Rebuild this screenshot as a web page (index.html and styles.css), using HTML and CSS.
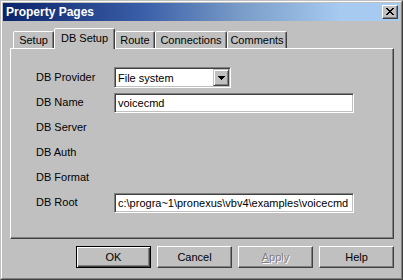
FILE: index.html
```html
<!DOCTYPE html>
<html>
<head>
<meta charset="utf-8">
<title>Property Pages</title>
<link rel="stylesheet" href="styles.css">
</head>
<body>
<div class="window">
  <div class="frame">
    <div class="titlebar">
      <span class="title">Property Pages</span>
      <button class="close" aria-label="Close">
        <svg width="8" height="7" viewBox="0 0 8 7" shape-rendering="crispEdges"><path fill="#000" d="M0 0h2v1h-2z M6 0h2v1h-2z M1 1h2v1h-2z M5 1h2v1h-2z M2 2h4v1h-4z M3 3h2v1h-2z M2 4h4v1h-4z M1 5h2v1h-2z M5 5h2v1h-2z M0 6h2v1h-2z M6 6h2v1h-2z"/></svg>
      </button>
    </div>
    <div class="tabs">
      <div class="tab tab-setup">Setup</div>
      <div class="tab tab-db selected">DB Setup</div>
      <div class="tab tab-route">Route</div>
      <div class="tab tab-conn">Connections</div>
      <div class="tab tab-comm">Comments</div>
    </div>
    <div class="panel">
      <div class="form">
        <label class="lbl">DB Provider</label>
        <div class="combo">
          <span class="combo-text">File system</span>
          <span class="drop">
            <svg width="7" height="4" viewBox="0 0 7 4" shape-rendering="crispEdges"><path fill="#000" d="M0 0h7v1h-7z M1 1h5v1h-5z M2 2h3v1h-3z M3 3h1v1h-1z"/></svg>
          </span>
        </div>
        <label class="lbl">DB Name</label>
        <div class="field">voicecmd</div>
        <label class="lbl">DB Server</label>
        <div></div>
        <label class="lbl">DB Auth</label>
        <div></div>
        <label class="lbl">DB Format</label>
        <div></div>
        <label class="lbl">DB Root</label>
        <div class="field">c:\progra~1\pronexus\vbv4\examples\voicecmd</div>
      </div>
    </div>
    <div class="buttons">
      <button class="btn default">OK</button>
      <button class="btn">Cancel</button>
      <button class="btn disabled"><u>A</u>pply</button>
      <button class="btn">Help</button>
    </div>
  </div>
</div>
</body>
</html>
```

FILE: styles.css
```css
* { box-sizing: border-box; }
html, body { margin: 0; padding: 0; background: #c0c0c0; }
body {
  font-family: "Liberation Sans", Arial, sans-serif;
  font-size: 11px;
  color: #000;
}
.window {
  width: 403px;
  height: 280px;
  background: #c0c0c0;
  border: 1px solid;
  border-color: #c0c0c0 #404040 #404040 #c0c0c0;
}
.frame {
  height: 100%;
  border: 1px solid;
  border-color: #ffffff #808080 #808080 #ffffff;
  padding: 1px;
  display: flex;
  flex-direction: column;
}
.titlebar {
  height: 18px;
  flex: none;
  display: flex;
  align-items: center;
  justify-content: space-between;
  padding: 0 2px 0 3px;
  background: linear-gradient(to right, #0a246a 0%, #3a5ea8 35%, #7a9cc8 60%, #a6caf0 85%, #a6caf0 100%);
}
.title {
  color: #fff;
  font-weight: bold;
  font-size: 12px;
  line-height: 18px;
}
.close {
  width: 16px;
  height: 14px;
  padding: 0;
  margin: 0;
  background: #c0c0c0;
  border: 1px solid;
  border-color: #ffffff #404040 #404040 #ffffff;
  box-shadow: inset -1px -1px #808080;
  display: flex;
  align-items: center;
  justify-content: center;
  padding-right: 1px;
  padding-bottom: 1px;
}
.close svg { display: block; }
.tabs {
  flex: none;
  height: 20px;
  margin-top: 7px;
  padding-left: 10px;
  display: flex;
  align-items: flex-end;
}
.tab {
  height: 17px;
  border: 1px solid;
  border-bottom: none;
  border-color: #ffffff #404040 transparent #ffffff;
  border-radius: 2px 2px 0 0;
  box-shadow: inset -1px 0 #808080;
  display: flex;
  align-items: center;
  justify-content: center;
  white-space: nowrap;
  background: #c0c0c0;
}
.tab-setup { width: 41px; }
.tab-db { width: 61px; }
.tab-route { width: 40px; }
.tab-conn { width: 72px; }
.tab-comm { width: 60px; }
.tab.selected {
  height: 21px;
  margin-bottom: -1px;
  position: relative;
  z-index: 1;
  padding-bottom: 3px;
}
.panel {
  flex: none;
  height: 191px;
  margin: 0 6px 0 7px;
  border: 1px solid;
  border-color: #ffffff #404040 #404040 #ffffff;
  box-shadow: inset -1px -1px #808080;
  padding: 18px 0 0 25px;
}
.form {
  display: grid;
  grid-template-columns: 78px 240px;
  grid-auto-rows: 21px;
  row-gap: 4px;
  align-items: center;
}
.lbl { line-height: 13px; }
.combo {
  width: 117px;
  height: 21px;
  background: #fff;
  border: 1px solid;
  border-color: #808080 #ffffff #ffffff #808080;
  box-shadow: inset 1px 1px #404040, inset -1px -1px #c0c0c0;
  padding: 1px 1px 1px 2px;
  display: flex;
  align-items: center;
  justify-content: space-between;
}
.combo-text { padding-left: 1px; }
.drop {
  width: 16px;
  height: 17px;
  background: #c0c0c0;
  border: 1px solid;
  border-color: #c0c0c0 #404040 #404040 #c0c0c0;
  box-shadow: inset 1px 1px #ffffff, inset -1px -1px #808080;
  display: flex;
  align-items: center;
  justify-content: center;
}
.drop svg { display: block; }
.field {
  width: 240px;
  height: 20px;
  background: #fff;
  border: 1px solid;
  border-color: #808080 #ffffff #ffffff #808080;
  box-shadow: inset 1px 1px #404040, inset -1px -1px #c0c0c0;
  padding: 0 0 0 3px;
  line-height: 18px;
  white-space: nowrap;
  overflow: hidden;
}
.buttons {
  flex: none;
  margin-top: 7px;
  padding-right: 6px;
  display: flex;
  justify-content: flex-end;
  gap: 6px;
}
.btn {
  width: 75px;
  height: 22px;
  margin: 0;
  padding: 0;
  font-family: "Liberation Sans", Arial, sans-serif;
  font-size: 11px;
  color: #000;
  background: #c0c0c0;
  border: 1px solid;
  border-color: #ffffff #404040 #404040 #ffffff;
  box-shadow: inset -1px -1px #808080;
}
.btn.default {
  border-color: #000;
  box-shadow: inset 1px 1px #ffffff, inset -1px -1px #404040, inset -2px -2px #808080;
}
.btn.disabled {
  color: #808080;
  text-shadow: 1px 1px #ffffff;
}
.btn u { text-decoration: underline; }
```
